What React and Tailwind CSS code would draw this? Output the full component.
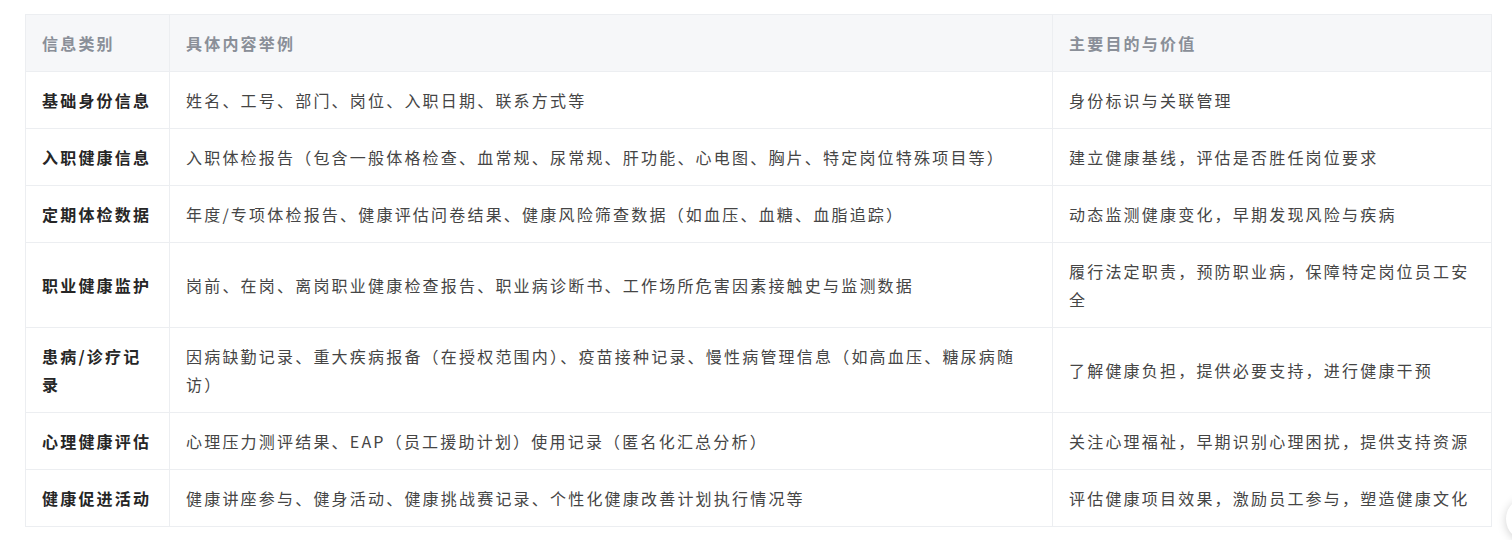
const rows = [
  ["基础身份信息", "姓名、工号、部门、岗位、入职日期、联系方式等", "身份标识与关联管理"],
  ["入职健康信息", "入职体检报告（包含一般体格检查、血常规、尿常规、肝功能、心电图、胸片、特定岗位特殊项目等）", "建立健康基线，评估是否胜任岗位要求"],
  ["定期体检数据", "年度/专项体检报告、健康评估问卷结果、健康风险筛查数据（如血压、血糖、血脂追踪）", "动态监测健康变化，早期发现风险与疾病"],
  ["职业健康监护", "岗前、在岗、离岗职业健康检查报告、职业病诊断书、工作场所危害因素接触史与监测数据", "履行法定职责，预防职业病，保障特定岗位员工安全"],
  ["患病/诊疗记录", "因病缺勤记录、重大疾病报备（在授权范围内）、疫苗接种记录、慢性病管理信息（如高血压、糖尿病随访）", "了解健康负担，提供必要支持，进行健康干预"],
  ["心理健康评估", "心理压力测评结果、EAP（员工援助计划）使用记录（匿名化汇总分析）", "关注心理福祉，早期识别心理困扰，提供支持资源"],
  ["健康促进活动", "健康讲座参与、健身活动、健康挑战赛记录、个性化健康改善计划执行情况等", "评估健康项目效果，激励员工参与，塑造健康文化"],
];

export default function App() {
  return (
    <div
      className="relative w-[1512px] h-[540px] overflow-hidden bg-white"
      style={{ fontFamily: '"Noto Sans CJK SC", "Noto Sans", sans-serif' }}
    >
      <div className="pt-[14px] pl-[25px]">
        <table className="w-[1466px] table-fixed border-collapse text-[16px] leading-[28px] tracking-[2.2px]">
          <colgroup>
            <col className="w-[144px]" />
            <col className="w-[883px]" />
            <col className="w-[439px]" />
          </colgroup>
          <thead>
            <tr className="bg-[#f6f7f9]">
              {["信息类别", "具体内容举例", "主要目的与价值"].map((h) => (
                <th
                  key={h}
                  className="border border-[#eceef1] px-4 py-[14px] text-left align-middle font-semibold text-[#8a8f98]"
                >
                  {h}
                </th>
              ))}
            </tr>
          </thead>
          <tbody>
            {rows.map((r) => (
              <tr key={r[0]}>
                <td className="border border-[#eceef1] px-4 py-[14px] align-middle font-bold text-[#262626]">
                  {r[0]}
                </td>
                <td className="border border-[#eceef1] px-4 py-[14px] align-middle text-[#454545]">
                  {r[1]}
                </td>
                <td className="border border-[#eceef1] px-4 py-[14px] align-middle text-[#454545]">
                  {r[2]}
                </td>
              </tr>
            ))}
          </tbody>
        </table>
      </div>

      {/* floating button peeking in at the right edge */}
      <div className="absolute left-[1506px] top-[497px] w-[44px] h-[44px] rounded-full bg-white shadow-[0_2px_10px_rgba(0,0,0,0.18)]" />
    </div>
  );
}
